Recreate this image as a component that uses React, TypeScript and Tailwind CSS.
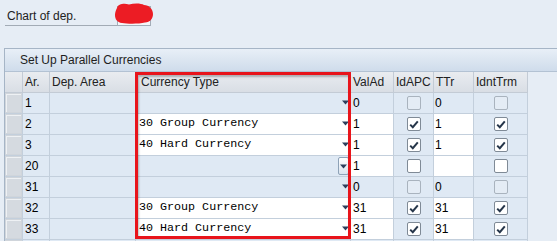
import React from "react";

type CB = "disabled" | "checked" | "unchecked";
type Row = {
  ar: string;
  cur: string;
  curW: boolean;
  focus?: boolean;
  valad: string;
  vW: boolean;
  idapc: CB;
  ttr: string;
  tW: boolean;
  idnt: CB;
};

const rows: Row[] = [
  { ar: "1", cur: "", curW: false, valad: "0", vW: false, idapc: "disabled", ttr: "0", tW: false, idnt: "disabled" },
  { ar: "2", cur: "30 Group Currency", curW: true, valad: "1", vW: true, idapc: "checked", ttr: "1", tW: true, idnt: "checked" },
  { ar: "3", cur: "40 Hard Currency", curW: true, valad: "1", vW: true, idapc: "checked", ttr: "1", tW: true, idnt: "checked" },
  { ar: "20", cur: "", curW: false, focus: true, valad: "1", vW: true, idapc: "unchecked", ttr: "", tW: true, idnt: "unchecked" },
  { ar: "31", cur: "", curW: false, valad: "0", vW: false, idapc: "disabled", ttr: "0", tW: false, idnt: "disabled" },
  { ar: "32", cur: "30 Group Currency", curW: true, valad: "31", vW: true, idapc: "checked", ttr: "31", tW: true, idnt: "checked" },
  { ar: "33", cur: "40 Hard Currency", curW: true, valad: "31", vW: true, idapc: "checked", ttr: "31", tW: true, idnt: "checked" },
];

const sans = { fontFamily: '"Liberation Sans", Arial, sans-serif' };
const mono = { fontFamily: '"Liberation Mono", "Courier New", monospace' };

function Check({ s }: { s: CB }) {
  if (s === "disabled") {
    return <div className="w-[14px] h-[14px] rounded-[2px] border border-[#a9b3be] bg-[#e4ecf5]" />;
  }
  return (
    <div className="w-[14px] h-[14px] rounded-[2px] border border-[#7f8a96] bg-white flex items-center justify-center">
      {s === "checked" && (
        <svg width="10" height="9" viewBox="0 0 10 9">
          <path d="M1.2 4.6 L3.8 7.2 L8.8 1.4" stroke="#26364a" strokeWidth="2" fill="none" />
        </svg>
      )}
    </div>
  );
}

function Arrow() {
  return (
    <svg width="7" height="5" viewBox="0 0 7 5">
      <polygon points="0,0.5 7,0.5 3.5,4.5" fill="#2d3f5c" />
    </svg>
  );
}

const cellB = "h-[21px] border-r border-b border-[#c3cfdc] shrink-0";
const blue = "bg-[#dfe9f4]";

function Selector() {
  return (
    <div className={`${cellB} w-[18px] bg-[#d0d5db] flex`}>
      <div className="flex-1 m-[1px] border-t border-l border-[#eef1f4] bg-[#d5dae0]" />
    </div>
  );
}

function DataRow({ r }: { r: Row }) {
  return (
    <div className="flex text-[12px] text-black leading-none" style={sans}>
      <Selector />
      <div className={`${cellB} w-[27px] ${blue} pl-[2px] flex items-center`}>{r.ar}</div>
      <div className={`${cellB} w-[86px] ${blue}`} />
      <div className={`${cellB} w-[215px] ${r.curW ? "bg-white" : blue} pl-[3px] flex items-center`}>
        <span className="flex-1 text-[11.7px]" style={mono}>{r.cur}</span>
        {r.focus ? (
          <div className="w-[11px] h-[18px] mr-[1px] border border-[#8ea2b7] rounded-[2px] bg-gradient-to-b from-white to-[#d9e3ee] flex items-start justify-center pt-[6px]">
            <Arrow />
          </div>
        ) : (
          <div className="w-[8px] h-[18px] mr-[1px] flex items-start justify-center pt-[6px]">
            <Arrow />
          </div>
        )}
      </div>
      <div className={`${cellB} w-[43px] ${r.vW ? "bg-white" : blue} pl-[2px] flex items-center`}>{r.valad}</div>
      <div className={`${cellB} w-[40px] ${blue} flex items-center justify-center`}>
        <Check s={r.idapc} />
      </div>
      <div className={`${cellB} w-[40px] ${r.tW ? "bg-white" : blue} pl-[1px] flex items-center`}>{r.ttr}</div>
      <div className={`${cellB} w-[54px] ${blue} flex items-center justify-center`}>
        <Check s={r.idnt} />
      </div>
    </div>
  );
}

const hcell = "h-[21px] border-r border-b border-[#c3cbd5] shrink-0 bg-gradient-to-b from-[#e9ecf0] to-[#d9dee5] flex items-center text-[12px] text-[#222]";

export default function App() {
  return (
    <div className="w-[557px] h-[241px] overflow-hidden bg-[#e6edf5] relative" style={sans}>
      {/* top field */}
      <div className="h-[48px] pt-[6px] pl-[5px] flex items-start">
        <div className="w-[112px] h-[20px] border-b border-[#a2abb5] pl-[2px] pt-[3px] text-[12px] text-[#222] leading-[14px]">
          Chart of dep.
        </div>
        <div className="relative w-[34px] h-[20px] border border-[#a3adb8] bg-[#f4f6f8]">
          <svg className="absolute left-[-4px] top-[-4px]" width="40" height="22" viewBox="0 0 40 22">
            <path
              d="M3 5 C4 1 10 0 15 1.5 C20 0 27 0 30 2 C35 2 39 6 39 11 C39 16 36 19 31 19.5 C25 21 14 21 8 20 C3 19.5 1 16 1 12 C1 9 2 7 3 5 Z"
              fill="#ec1c24"
            />
          </svg>
        </div>
      </div>

      {/* panel */}
      <div className="ml-[4px] border-t border-l border-[#a6b5c6]">
        <div className="h-[23px] border-b border-[#b3c2d3] bg-gradient-to-b from-[#e8eff7] to-[#cfdceb] pl-[15px] flex items-center text-[12px] text-[#1e1e1e]">
          Set Up Parallel Currencies
        </div>
        <div className="flex">
          <div className={`${hcell} w-[18px]`} />
          <div className={`${hcell} w-[27px] pl-[2px]`}>Ar.</div>
          <div className={`${hcell} w-[86px] pl-[2px]`}>Dep. Area</div>
          <div className={`${hcell} w-[215px] pl-[5px]`}>Currency Type</div>
          <div className={`${hcell} w-[43px] pl-[2px]`}>ValAd</div>
          <div className={`${hcell} w-[40px] pl-[2px]`}>IdAPC</div>
          <div className={`${hcell} w-[40px] pl-[2px]`}>TTr</div>
          <div className={`${hcell} w-[54px] pl-[2px]`}>IdntTrm</div>
        </div>
        {rows.map((r, i) => (
          <DataRow key={i} r={r} />
        ))}
        <DataRow r={{ ar: "", cur: "", curW: false, valad: "", vW: false, idapc: "disabled", ttr: "", tW: false, idnt: "disabled" }} />
      </div>

      {/* red highlight */}
      <div className="absolute left-[135px] top-[72px] w-[216px] h-[167px] border-[3px] border-[#e8141b] shadow-[inset_1px_2px_2px_rgba(0,0,0,0.25)]" />
    </div>
  );
}
